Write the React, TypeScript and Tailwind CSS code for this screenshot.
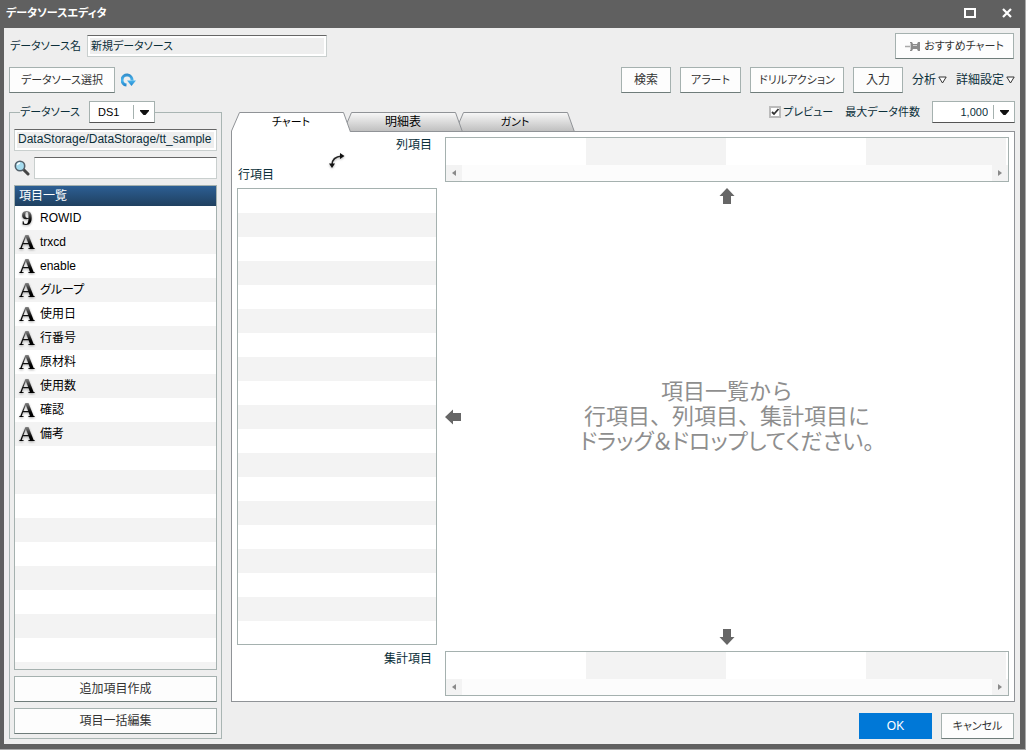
import { useState } from 'react'

interface Field {
  name: string
  type: 'number' | 'text'
}

const FIELDS: Field[] = [
  { name: 'ROWID', type: 'number' },
  { name: 'trxcd', type: 'text' },
  { name: 'enable', type: 'text' },
  { name: 'グループ', type: 'text' },
  { name: '使用日', type: 'text' },
  { name: '行番号', type: 'text' },
  { name: '原材料', type: 'text' },
  { name: '使用数', type: 'text' },
  { name: '確認', type: 'text' },
  { name: '備考', type: 'text' },
]

const TABS = [
  { label: 'チャート', layer: 'z-30', size: 'text-[11px]' },
  { label: '明細表', layer: 'z-20 -ml-2', size: 'text-xs' },
  { label: 'ガント', layer: 'z-10 -ml-2', size: 'text-[11px]' },
]

const BUTTON = 'flex h-[26px] items-center justify-center border border-[#a5b1af] border-b-[#6f7c7a] bg-[#fdfdfd] text-[#333] hover:bg-white'
const TEXTBOX = 'h-[22px] min-w-0 border border-[#c9cfce] border-t-[#666]'

function ToolButton({ children, className = '' }: { children: React.ReactNode; className?: string }) {
  return <button type="button" className={`${BUTTON} ${className}`}>{children}</button>
}

function MenuButton({ label }: { label: string }) {
  return (
    <button type="button" className="flex items-center gap-0.5 text-[#0b2f3a]">
      {label}
      <svg width="9" height="8" viewBox="0 0 9 8" fill="#fff" stroke="#333">
        <path d="M.8 1h7.4L4.5 7z" />
      </svg>
    </button>
  )
}

function DropDown({ id, options, className }: { id: string; options: string[]; className: string }) {
  return (
    <div className="relative flex">
      <select
        id={id}
        className={`h-[22px] appearance-none border border-[#a5b1af] border-b-[#555] bg-white text-[11px] ${className}`}
      >
        {options.map(o => <option key={o}>{o}</option>)}
      </select>
      <span className="pointer-events-none absolute inset-y-1 right-0 flex w-[22px] items-center justify-center border-l border-[#a5b1af]">
        <svg width="9" height="5" viewBox="0 0 9 5"><path d="M0 0h9v1L5.5 5h-2L0 1z" fill="#111" /></svg>
      </span>
    </div>
  )
}

function FieldIcon({ type }: { type: Field['type'] }) {
  return (
    <span className="w-[18px] bg-linear-to-b from-[#888] from-20% to-black to-70% bg-clip-text text-center font-['Liberation_Serif',serif] text-[22px] leading-6 font-bold text-transparent drop-shadow-[0_1px_1px_rgba(0,0,0,0.35)]">
      {type === 'number' ? '9' : 'A'}
    </span>
  )
}

// Horizontal drop area with its scrollbar
function DropStrip({ label }: { label: string }) {
  return (
    <div aria-label={label} className="flex h-[45px] flex-col border border-[#a5b1af] bg-white">
      <div className="mr-0.5 flex-1 bg-[repeating-linear-gradient(to_right,#fff_0_140px,#f3f3f3_140px_280px)]" />
      <div className="flex h-4 justify-between bg-[#fcfcfc]">
        <button type="button" aria-label="左へ" className="flex w-4 items-center justify-center bg-[#f3f3f3]">
          <svg width="4" height="6" viewBox="0 0 4 6"><path d="M4 0v6L0 3z" fill="#8a8a8a" /></svg>
        </button>
        <button type="button" aria-label="右へ" className="flex w-4 items-center justify-center bg-[#f3f3f3]">
          <svg width="4" height="6" viewBox="0 0 4 6"><path d="M0 0v6l4-3z" fill="#8a8a8a" /></svg>
        </button>
      </div>
    </div>
  )
}

function Arrow({ className = '' }: { className?: string }) {
  return (
    <svg width="16" height="16" viewBox="0 0 16 16" className={className}>
      <path d="M8 0l7.5 8H12v8H4V8H.5z" fill="#666" />
    </svg>
  )
}

export default function App() {
  const [tab, setTab] = useState(0)
  const [preview, setPreview] = useState(true)

  return (
    <div className="h-screen min-h-[480px] bg-white pb-px font-['Liberation_Sans','Noto_Sans_CJK_JP',sans-serif] text-xs leading-4 text-[#0b2f3a] [font-feature-settings:'palt']">
      <div className="flex h-full flex-col border-r border-b border-[#aaa] bg-[#606060] pr-[5px] pb-[5px] pl-1">
        {/* Title bar */}
        <header className="flex h-7 shrink-0 items-center justify-between pr-2 pb-0.5 pl-0.5 text-white">
          <h1 className="text-[11px] font-bold">データソースエディタ</h1>
          <div className="flex items-center gap-[26px]">
            <button type="button" aria-label="最大化">
              <svg width="12" height="10" viewBox="0 0 12 10" fill="none" stroke="#fff" strokeWidth="2">
                <path d="M1 1h10v8H1z" />
              </svg>
            </button>
            <button type="button" aria-label="閉じる">
              <svg width="10" height="10" viewBox="0 0 10 10" fill="none" stroke="#fff" strokeWidth="2.2">
                <path d="M1 1l8 8M9 1L1 9" />
              </svg>
            </button>
          </div>
        </header>

        <main className="flex min-h-0 flex-1 flex-col gap-2 bg-[#eee] p-[5px]">
          {/* Name row */}
          <div className="flex h-[26px] shrink-0 items-center pr-px">
            <label htmlFor="ds-name" className="w-[78px] pl-px text-[11px] whitespace-nowrap">データソース名</label>
            <input
              id="ds-name"
              readOnly
              value="新規データソース"
              className={`${TEXTBOX} w-60 bg-[#eee] px-[3px] pb-[3px] text-[11px] shadow-[inset_0_0_0_2px_#fff] outline-none`}
            />
            <ToolButton className="ml-auto w-[119px] gap-1 text-[11px]">
              <svg width="15" height="11" viewBox="0 0 15 11">
                <path d="M0 5.5h6" stroke="#aaa" strokeWidth="1.5" />
                <path d="M5 1h2l1 2h4l1-2h2v9h-2l-1-2H8l-1 2H5z" fill="#8c8c8c" />
                <path d="M5.5 2v7M8 4.5h4" stroke="#d0d0d0" />
              </svg>
              おすすめチャート
            </ToolButton>
          </div>

          {/* Toolbar */}
          <div className="flex h-[26px] shrink-0 items-center gap-[9px]">
            <div className="flex items-center gap-1.5">
              <ToolButton className="w-[106px] text-[11px]">データソース選択</ToolButton>
              <button type="button" aria-label="再読込">
                <svg width="15" height="15" viewBox="0 0 15 15">
                  <defs>
                    <linearGradient id="reload" x1="0" y1="0" x2="0" y2="15" gradientUnits="userSpaceOnUse">
                      <stop offset="0" stopColor="#2f86c4" />
                      <stop offset="0.5" stopColor="#46b4ee" />
                      <stop offset="1" stopColor="#1873bd" />
                    </linearGradient>
                  </defs>
                  <path d="M5.5 12A5 5 0 1 1 11 7.500" fill="none" stroke="url(#reload)" strokeWidth="3" />
                  <path d="M6 7.500h9L10.500 13z" fill="url(#reload)" />
                </svg>
              </button>
            </div>
            <ToolButton className="ml-auto w-[50px]">検索</ToolButton>
            <ToolButton className="w-[61px] text-[11px]">アラート</ToolButton>
            <ToolButton className="w-[94px] text-[11px]">ドリルアクション</ToolButton>
            <ToolButton className="w-[50px]">入力</ToolButton>
            <MenuButton label="分析" />
            <MenuButton label="詳細設定" />
          </div>

          <div className="grid min-h-0 flex-1 grid-cols-[213px_minmax(0,1fr)] gap-[9px]">
            {/* Data source */}
            <fieldset className="flex min-h-0 min-w-0 flex-col gap-1.5 border border-[#a9b5b3] px-1 pb-1">
              <legend className="ml-1.5 flex items-center">
                <label htmlFor="ds" className="w-[69px] text-[11px]">データソース</label>
                <DropDown id="ds" options={['DS1', 'DS2']} className="w-[66px] pl-2 text-black" />
              </legend>
              <input
                readOnly
                aria-label="パス"
                value="DataStorage/DataStorage/tt_sample"
                className={`${TEXTBOX} mt-1.5 shrink-0 bg-[#eee] px-[3px] pb-[3px] shadow-[inset_0_0_0_2px_#fff] outline-none`}
              />
              <div className="flex shrink-0 items-center gap-1">
                <svg width="16" height="16" viewBox="0 0 16 16">
                  <path d="M9.5 9.5l4.5 4.5" stroke="#444" strokeWidth="3" strokeLinecap="round" />
                  <circle cx="6" cy="6" r="4.700" fill="#a5dcef" stroke="#54616b" strokeWidth="1.6" />
                  <path d="M3.3 5.2A3 3 0 0 1 6 3" stroke="#fff" strokeWidth="1.3" fill="none" />
                </svg>
                <input type="search" aria-label="項目検索" className={`${TEXTBOX} flex-1 bg-white px-1`} />
              </div>
              <div className="flex min-h-0 flex-1 flex-col border border-[#a5b1af]">
                <h2 className="h-5 shrink-0 bg-linear-to-b from-[#2d5f94] to-[#1f4060] pl-1 leading-5 text-white">項目一覧</h2>
                <ul className="min-h-0 flex-1 overflow-hidden bg-[repeating-linear-gradient(to_bottom,#fff_0_24px,#f3f3f3_24px_48px)]">
                  {FIELDS.map(f => (
                    <li key={f.name} className="flex h-6 items-center gap-1 pl-[3px] text-black">
                      <FieldIcon type={f.type} />
                      {f.name}
                    </li>
                  ))}
                </ul>
              </div>
              <ToolButton className="shrink-0">追加項目作成</ToolButton>
              <ToolButton className="shrink-0">項目一括編集</ToolButton>
            </fieldset>

            <div className="flex min-h-0 flex-col">
              {/* Tabs and preview options */}
              <div className="flex h-[30px] shrink-0 items-start justify-between">
                <div role="tablist" className="-mb-px flex self-end">
                  {TABS.map((t, i) => (
                    <button
                      key={t.label}
                      type="button"
                      role="tab"
                      aria-selected={tab === i}
                      onClick={() => setTab(i)}
                      className={`relative h-5 w-[120px] text-black ${t.size} ${tab === i ? 'z-40' : ''} ${t.layer}`}
                    >
                      <svg width="120" height="20" viewBox="0 0 120 20" className="absolute inset-0">
                        <defs>
                          <linearGradient id="tab" x1="0" y1="0" x2="0" y2="1">
                            <stop offset="0" stopColor="#f8f8f8" />
                            <stop offset="1" stopColor="#bdbdbd" />
                          </linearGradient>
                        </defs>
                        <path d="M.5 20v-1L8.5.5h104L119.5 20z" fill={tab === i ? '#fff' : 'url(#tab)'} />
                        <path d="M.5 20v-1L8.5.5h104L119.5 20" fill="none" stroke="#909397" />
                        {tab !== i && <path d="M0 19.5h120" stroke="#909397" />}
                      </svg>
                      <span className="relative">{t.label}</span>
                    </button>
                  ))}
                </div>
                <div className="flex items-center">
                  <label className="mr-3 flex items-center gap-0.5 text-[11px]">
                    <span className="relative flex">
                      <input
                        type="checkbox"
                        checked={preview}
                        onChange={e => setPreview(e.target.checked)}
                        className="size-3 appearance-none border-2 border-[#bbb] bg-white"
                      />
                      {preview && (
                        <svg width="12" height="12" viewBox="0 0 12 12" className="pointer-events-none absolute inset-0">
                          <path d="M3 6l2 2 4.5-5" fill="none" stroke="#333" strokeWidth="1.8" />
                        </svg>
                      )}
                    </span>
                    プレビュー
                  </label>
                  <label htmlFor="max-rows" className="mr-3 text-[11px]">最大データ件数</label>
                  <DropDown id="max-rows" options={['1,000', '5,000', '10,000']} className="w-[83px] pr-[26px] [text-align-last:right]" />
                </div>
              </div>

              {/* Layout panel */}
              <div className="grid min-h-0 flex-1 grid-cols-[200px_minmax(0,1fr)] grid-rows-[45px_minmax(0,1fr)_45px] gap-x-2 gap-y-1.5 border border-[#909397] bg-white p-[5px]">
                <div className="flex flex-col justify-between pr-[5px]">
                  <div className="text-right">列項目</div>
                  <div className="flex items-end justify-between pl-px">
                    <span>行項目</span>
                    <button type="button" aria-label="行列入替" className="mr-[86px] mb-3.5">
                      <svg width="17" height="16" viewBox="0 0 17 16" className="drop-shadow-[0_1px_1px_rgba(0,0,0,0.3)]">
                        <path d="M3 12C3 6 6 3.500 13 3" fill="none" stroke="#222" strokeWidth="1.6" />
                        <path d="M11 0l4.500 3L11 6zM0 10.500h6L3 15z" fill="#111" />
                      </svg>
                    </button>
                  </div>
                </div>
                <DropStrip label="列項目" />
                <div
                  aria-label="行項目"
                  className="border border-[#a5b1af] bg-[repeating-linear-gradient(to_bottom,#fff_0_24px,#f3f3f3_24px_48px)]"
                />
                <div className="flex flex-col items-center justify-between">
                  <Arrow />
                  <div className="grid w-full grid-cols-[16px_minmax(0,1fr)_16px] items-center">
                    <Arrow className="-rotate-90" />
                    <p className="text-center text-[22px] leading-[25px] text-[#8e8e8e] [font-feature-settings:normal]">
                      項目一覧から<br />
                      行項目、列項目、集計項目に<br />
                      <span className="[font-feature-settings:'palt']">ドラッグ＆ドロップしてください。</span>
                    </p>
                  </div>
                  <Arrow className="rotate-180" />
                </div>
                <div className="pr-[5px] text-right">集計項目</div>
                <DropStrip label="集計項目" />
              </div>

              {/* Footer */}
              <div className="flex shrink-0 justify-end gap-[9px] pt-[11px] pr-px">
                <button type="button" className="h-[26px] w-[73px] bg-[#0078d7] text-white hover:bg-[#0a84e3]">OK</button>
                <ToolButton className="w-[73px] text-[11px]">キャンセル</ToolButton>
              </div>
            </div>
          </div>
        </main>
      </div>
    </div>
  )
}
